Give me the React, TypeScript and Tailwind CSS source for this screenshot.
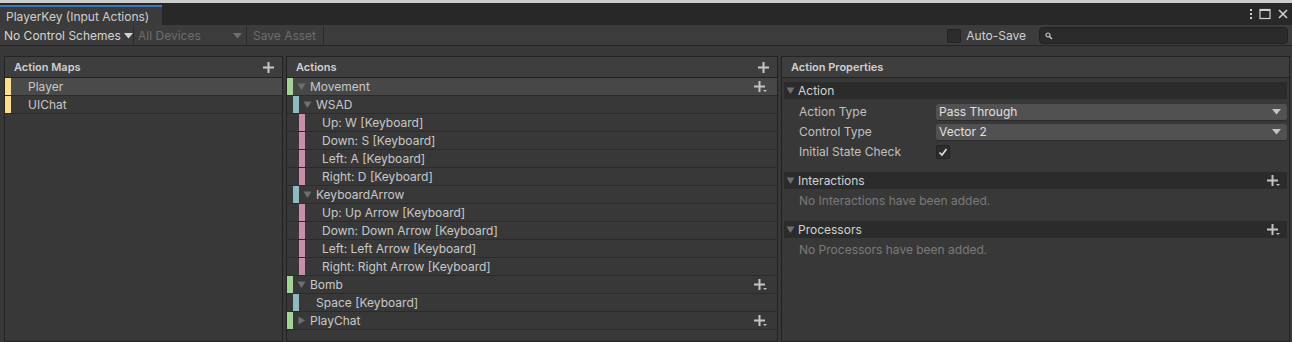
import React from 'react';

const font = { fontFamily: 'Inter, "Noto Sans", sans-serif' };

function Tri({ open = true }: { open?: boolean }) {
  return (
    <svg width="9" height="9" viewBox="0 0 9 9" className="shrink-0">
      {open ? <polygon points="0.5,1.5 8.5,1.5 4.5,8" fill="#6f6f6f" /> : <polygon points="1.5,0.5 8,4.5 1.5,8.5" fill="#6f6f6f" />}
    </svg>
  );
}

function PlusDrop() {
  return (
    <svg width="14" height="12" viewBox="0 0 14 12">
      <rect x="4.5" y="0" width="2" height="11" fill="#c4c4c4" />
      <rect x="0" y="4.5" width="11" height="2" fill="#c4c4c4" />
      <polygon points="9,9 13,9 11,11" fill="#c4c4c4" />
    </svg>
  );
}

function Plus() {
  return (
    <svg width="11" height="11" viewBox="0 0 11 11">
      <rect x="4.5" y="0" width="2" height="11" fill="#c8c8c8" />
      <rect x="0" y="4.5" width="11" height="2" fill="#c8c8c8" />
    </svg>
  );
}

function Caret({ color = '#c4c4c4' }: { color?: string }) {
  return (
    <svg width="9" height="6" viewBox="0 0 9 6">
      <polygon points="0,0 9,0 4.5,5.5" fill={color} />
    </svg>
  );
}

function Check() {
  return (
    <svg width="10" height="10" viewBox="0 0 10 10">
      <polyline points="1.5,5.5 4,8 8.5,2" fill="none" stroke="#e0e0e0" strokeWidth="1.6" />
    </svg>
  );
}

type Row = { text: string; bars: string[]; tri?: 'open' | 'closed'; plus?: boolean; selected?: boolean };

const G = '#a4d397';
const T = '#8fbac1';
const P = '#c88fac';

const actions: Row[] = [
  { text: 'Movement', bars: [G], tri: 'open', plus: true, selected: true },
  { text: 'WSAD', bars: ['', T], tri: 'open' },
  { text: 'Up: W [Keyboard]', bars: ['', '', P] },
  { text: 'Down: S [Keyboard]', bars: ['', '', P] },
  { text: 'Left: A [Keyboard]', bars: ['', '', P] },
  { text: 'Right: D [Keyboard]', bars: ['', '', P] },
  { text: 'KeyboardArrow', bars: ['', T], tri: 'open' },
  { text: 'Up: Up Arrow [Keyboard]', bars: ['', '', P] },
  { text: 'Down: Down Arrow [Keyboard]', bars: ['', '', P] },
  { text: 'Left: Left Arrow [Keyboard]', bars: ['', '', P] },
  { text: 'Right: Right Arrow [Keyboard]', bars: ['', '', P] },
  { text: 'Bomb', bars: [G], tri: 'open', plus: true },
  { text: 'Space [Keyboard]', bars: ['', T] },
  { text: 'PlayChat', bars: [G], tri: 'closed', plus: true },
];

function ActionRow({ r }: { r: Row }) {
  return (
    <div className={`flex h-[18px] items-stretch border-b border-[#2b2b2b] ${r.selected ? 'bg-[#474747]' : ''}`}>
      {r.bars.map((c, i) => (
        <div key={i} className="w-[6px] shrink-0" style={{ background: c || 'transparent' }} />
      ))}
      <div className="flex flex-1 items-center pl-[4px] pr-[9px]">
        {r.tri ? (
          <span className="mr-[4px] flex items-center"><Tri open={r.tri === 'open'} /></span>
        ) : (
          <span className="w-[13px]" />
        )}
        <span className="flex-1 text-[12px] text-[#c8c8c8]">{r.text}</span>
        {r.plus && <PlusDrop />}
      </div>
    </div>
  );
}

function PanelHeader({ title, plus }: { title: string; plus?: boolean }) {
  return (
    <div className="flex h-[21px] items-center justify-between border-b border-[#232323] bg-[#3e3e3e] pl-[9px] pr-[8px]">
      <span className="pt-[1px] text-[11px] font-semibold text-[#d0d0d0]">{title}</span>
      {plus && <Plus />}
    </div>
  );
}

function Foldout({ title, plus }: { title: string; plus?: boolean }) {
  return (
    <div className="flex h-[17px] items-center bg-[#2b2b2b] pl-[2px] pr-[6px]">
      <Tri />
      <span className="ml-[3px] flex-1 text-[12px] text-[#d2d2d2]">{title}</span>
      {plus && <PlusDrop />}
    </div>
  );
}

function Select({ value }: { value: string }) {
  return (
    <div className="flex h-[17px] flex-1 items-center justify-between rounded-[3px] border-b border-[#2a2a2a] bg-[#515151] pl-[3px] pr-[6px]">
      <span className="text-[12px] text-[#e0e0e0]">{value}</span>
      <Caret />
    </div>
  );
}

export default function App() {
  return (
    <div className="flex h-[342px] w-[1292px] flex-col overflow-hidden bg-[#383838]" style={font}>
      <div className="h-[3px] bg-[#cdcdcd]" />
      {/* tab bar */}
      <div className="flex h-[22px] items-end bg-[#282828]">
        <div className="flex h-[20px] w-[162px] items-center border-t-2 border-[#3a79bb] bg-[#3b3b3b] pl-[6px] pt-[1px]">
          <span className="text-[12px] text-[#cfcfcf]">PlayerKey (Input Actions)</span>
        </div>
        <div className="flex h-full flex-1 items-center justify-end gap-[6px] pr-[3px]">
          <svg width="4" height="12" viewBox="0 0 4 12">
            <rect x="1" y="1" width="2" height="2" fill="#d0d0d0" />
            <rect x="1" y="5" width="2" height="2" fill="#d0d0d0" />
            <rect x="1" y="9" width="2" height="2" fill="#d0d0d0" />
          </svg>
          <svg width="12" height="12" viewBox="0 0 12 12">
            <rect x="1" y="1.5" width="10" height="9" fill="none" stroke="#d0d0d0" strokeWidth="1.2" />
            <rect x="1" y="1" width="10" height="2" fill="#d0d0d0" />
          </svg>
          <svg width="12" height="12" viewBox="0 0 12 12">
            <path d="M2 2 L10 10 M10 2 L2 10" stroke="#d0d0d0" strokeWidth="1.6" />
          </svg>
        </div>
      </div>
      {/* toolbar */}
      <div className="flex h-[21px] items-center border-b border-[#232323] bg-[#3c3c3c] pt-[1px]">
        <div className="flex h-full w-[134px] items-center gap-[3px] border-r border-[#2a2a2a] pl-[4px]">
          <span className="text-[12px] text-[#d4d4d4]">No Control Schemes</span>
          <Caret color="#d4d4d4" />
        </div>
        <div className="flex h-full w-[113px] items-center justify-between border-r border-[#2a2a2a] pl-[4px] pr-[4px]">
          <span className="text-[12px] text-[#6d6d6d]">All Devices</span>
          <Caret color="#6d6d6d" />
        </div>
        <div className="flex h-full w-[77px] items-center border-r border-[#2a2a2a] pl-[6px]">
          <span className="text-[12px] text-[#6d6d6d]">Save Asset</span>
        </div>
        <div className="flex-1" />
        <div className="h-[14px] w-[14px] rounded-[2px] border border-[#232323] bg-[#2c2c2c]" />
        <span className="ml-[5px] text-[12px] text-[#cfcfcf]">Auto-Save</span>
        <div className="ml-[13px] mr-[4px] flex h-[17px] w-[249px] items-center rounded-[4px] border border-[#212121] bg-[#2a2a2a] pl-[5px]">
          <svg width="8" height="8" viewBox="0 0 8 8">
            <circle cx="3" cy="3" r="2" fill="none" stroke="#c8c8c8" strokeWidth="1.2" />
            <path d="M4.5 4.5 L7 7" stroke="#c8c8c8" strokeWidth="1.5" />
          </svg>
        </div>
      </div>
      {/* panels */}
      <div className="flex flex-1 gap-[3px] pl-[4px] pr-[2px] pt-[10px]">
        <div className="flex w-[279px] flex-col border border-[#232323] bg-[#383838]">
          <PanelHeader title="Action Maps" plus />
          {[
            { t: 'Player', s: true },
            { t: 'UIChat', s: false },
          ].map((m) => (
            <div key={m.t} className={`flex h-[18px] items-stretch border-b border-[#2b2b2b] ${m.s ? 'bg-[#4a4a4a]' : ''}`}>
              <div className="w-[6px] bg-[#fbe08f]" />
              <span className="flex items-center pl-[17px] text-[12px] text-[#c8c8c8]">{m.t}</span>
            </div>
          ))}
        </div>
        <div className="flex w-[492px] flex-col border border-[#232323] bg-[#383838]">
          <PanelHeader title="Actions" plus />
          {actions.map((r) => (
            <ActionRow key={r.text} r={r} />
          ))}
        </div>
        <div className="flex flex-1 flex-col border border-[#232323] bg-[#383838]">
          <PanelHeader title="Action Properties" />
          <div className="flex flex-col pl-[2px] pr-[2px] pt-[4px]">
            <Foldout title="Action" />
            <div className="flex flex-col gap-[2px] pt-[4px]">
              <div className="flex h-[18px] items-center">
                <span className="w-[152px] pl-[15px] text-[12px] text-[#c0c0c0]">Action Type</span>
                <Select value="Pass Through" />
              </div>
              <div className="flex h-[18px] items-center">
                <span className="w-[152px] pl-[15px] text-[12px] text-[#c0c0c0]">Control Type</span>
                <Select value="Vector 2" />
              </div>
              <div className="flex h-[18px] items-center">
                <span className="w-[152px] pl-[15px] text-[12px] text-[#c0c0c0]">Initial State Check</span>
                <div className="flex h-[14px] w-[14px] items-center justify-center rounded-[2px] border border-[#232323] bg-[#2c2c2c]">
                  <Check />
                </div>
              </div>
            </div>
            <div className="mt-[11px]">
              <Foldout title="Interactions" plus />
            </div>
            <div className="flex h-[24px] items-center pl-[15px] text-[12px] text-[#7a7a7a]">No Interactions have been added.</div>
            <div className="mt-[8px]">
              <Foldout title="Processors" plus />
            </div>
            <div className="flex h-[24px] items-center pl-[15px] text-[12px] text-[#7a7a7a]">No Processors have been added.</div>
          </div>
        </div>
      </div>
    </div>
  );
}
